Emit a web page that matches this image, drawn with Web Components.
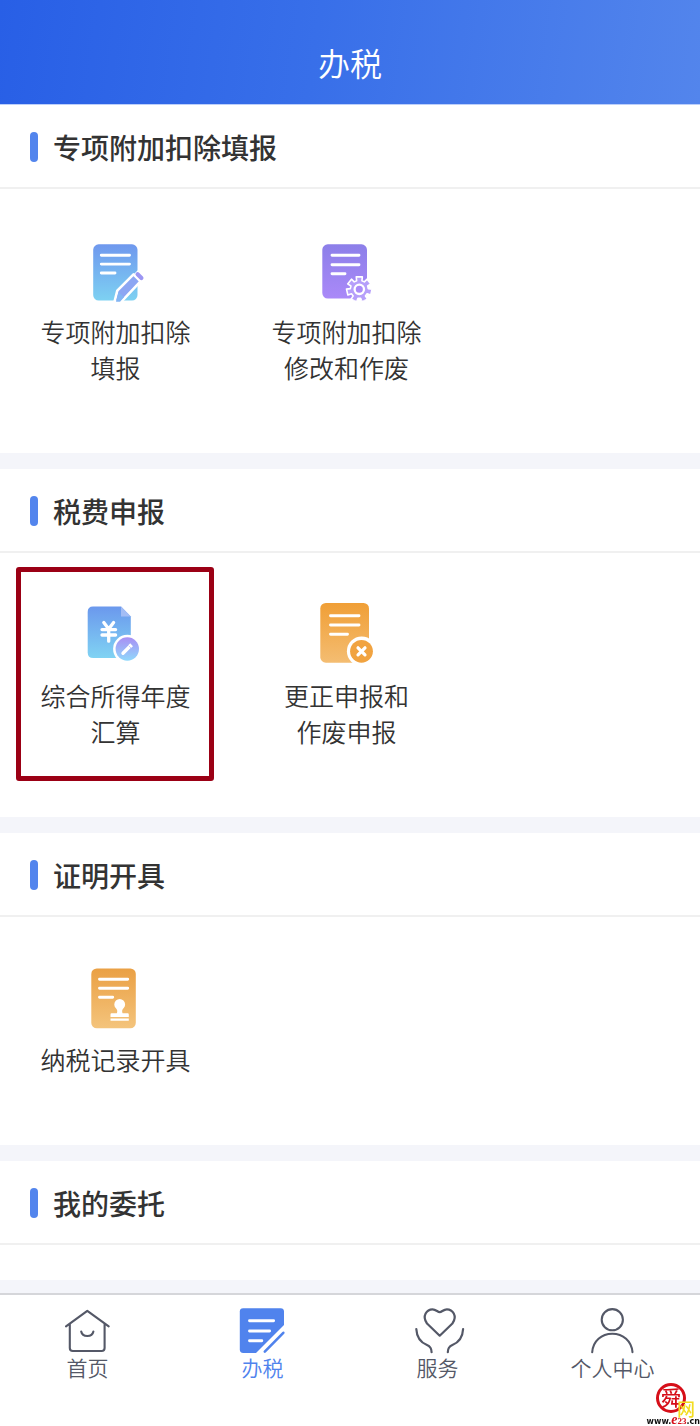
<!DOCTYPE html>
<html lang="zh-CN">
<head>
<meta charset="utf-8">
<meta name="viewport" content="width=device-width, initial-scale=1">
<title>办税</title>
<style>
  body { margin: 0; background: #f4f5fa; font-family: "Noto Sans CJK SC", sans-serif; color: #333; }
</style>
</head>
<body>
<tax-app>
  <app-header slot="header">办税</app-header>
  <menu-section heading="专项附加扣除填报">
    <menu-item icon="fill">专项附加扣除<br>填报</menu-item>
    <menu-item icon="modify">专项附加扣除<br>修改和作废</menu-item>
  </menu-section>
  <menu-section heading="税费申报">
    <menu-item icon="annual" marked>综合所得年度<br>汇算</menu-item>
    <menu-item icon="correct">更正申报和<br>作废申报</menu-item>
  </menu-section>
  <menu-section heading="证明开具">
    <menu-item icon="record">纳税记录开具</menu-item>
  </menu-section>
  <menu-section heading="我的委托"></menu-section>
  <tab-bar slot="footer">
    <tab-item icon="home">首页</tab-item>
    <tab-item icon="tax" active>办税</tab-item>
    <tab-item icon="service">服务</tab-item>
    <tab-item icon="user">个人中心</tab-item>
  </tab-bar>
  <site-mark slot="footer"></site-mark>
</tax-app>

<script>
const define = (name, html, setup, observed = []) => {
  const template = document.createElement('template');
  template.innerHTML = html;
  customElements.define(name, class extends HTMLElement {
    static observedAttributes = observed;
    constructor() {
      super();
      this.attachShadow({ mode: 'open' }).append(template.content.cloneNode(true));
    }
    connectedCallback() { if (setup) setup(this, this.shadowRoot); }
    attributeChangedCallback() { if (setup) setup(this, this.shadowRoot); }
  });
};

const gradient = (from, to) =>
  `<defs><linearGradient id="g" x1="0" y1="0" x2="0" y2="1"><stop stop-color="${from}"/><stop offset="1" stop-color="${to}"/></linearGradient></defs>`;
const lines = d => `<path d="${d}" fill="none" stroke="#fff" stroke-width="2.9" stroke-linecap="round"/>`;

/* A cog outline with seven teeth */
const cog = (cx, cy, outer, inner) => {
  const points = [];
  for (let i = 0; i < 7; i++) {
    const a = i * Math.PI * 2 / 7 - Math.PI / 2;
    for (const [r, o] of [[inner, -.3], [outer, -.24], [outer, .24], [inner, .3]])
      points.push((cx + r * Math.cos(a + o)).toFixed(2) + ',' + (cy + r * Math.sin(a + o)).toFixed(2));
  }
  return points.join(' ');
};

const ICONS = {
  fill: gradient('#6f98ee', '#7dd1f2') +
    `<rect x="10.2" y="5.3" width="44.3" height="56.2" rx="5.5" fill="url(#g)"/>` +
    lines('M18.3 16.3H46.5M18.3 25.1H46.5M18.3 34H32') +
    `<path d="M31.5 62.7L34.3 51.6L50.5 35.4L57.5 42.4L41 59.8L38 62.7Z" fill="#8ca6f3" stroke="#fff" stroke-width="2.6" stroke-linejoin="round"/>
     <path d="M33 62.7L35.6 53L41 58.3L37 62.7Z" fill="#83b5f3"/>
     <path d="M52.6 33.4L58.8 39.6" stroke="#fff" stroke-width="6"/>
     <path d="M54.6 35.2L58.4 39" stroke="#9c96f3" stroke-width="4.2" stroke-linecap="round"/>`,
  modify: gradient('#8c7fe9', '#aa89f8') +
    `<rect x="8.3" y="5.3" width="44.7" height="54.2" rx="5.5" fill="url(#g)"/>` +
    lines('M18 16.3H45M18 25.7H45M18 34.7H31') +
    `<clipPath id="c"><rect width="65" height="61.7"/></clipPath>
     <g clip-path="url(#c)"><polygon points="${cog(45.3, 50.3, 12.8, 9)}" fill="#b69ffa" stroke="#fff" stroke-width="1.6" stroke-linejoin="round"/>
     <circle cx="45.3" cy="50.3" r="4.7" fill="#ab8bf8" stroke="#fff" stroke-width="2.3"/></g>`,
  annual: gradient('#6b98ed', '#80d3f3') +
    `<linearGradient id="b" x1="0" y1="0" x2="0" y2="1"><stop stop-color="#a98ff4"/><stop offset="1" stop-color="#90d8fb"/></linearGradient>
     <path d="M10 3.4H38L47.8 13.5V49.5Q47.8 55 42.3 55H10.2Q4.7 55 4.7 49.5V8.9Q4.7 3.4 10 3.4Z" fill="url(#g)"/>
     <path d="M38 3.4L47.8 13.5H38Z" fill="#a3bdf5"/>
     <path d="M20.8 19.6L25.7 26L30.6 19.6M19 26.6H32.6M19 32H32.6M25.7 26V38.2" fill="none" stroke="#fff" stroke-width="3.3" stroke-linecap="round" stroke-linejoin="round"/>
     <circle cx="44.3" cy="46" r="14.2" fill="#fff"/><circle cx="44.3" cy="46" r="11.7" fill="url(#b)"/>
     <path d="M40 50.2L46 44.3" stroke="#fff" stroke-width="3.4" stroke-linecap="round"/>
     <path d="M46.4 43.9L48.6 41.8" stroke="#fff" stroke-width="4"/><path d="M45.6 42.6L48 45" stroke="#a9aff8" stroke-width=".6"/>`,
  correct: gradient('#f09f36', '#f4bd72') +
    `<rect x="6.3" y="0" width="48.7" height="59.7" rx="5.5" fill="url(#g)"/>` +
    lines('M16.5 12.7H45M16.5 22H45M16.5 31.3H33.5') +
    `<circle cx="47.7" cy="48.3" r="14.8" fill="#fff"/><circle cx="47.5" cy="48.3" r="11.4" fill="#f1a340"/>
     <path d="M44 44.8L51 51.8M51 44.8L44 51.8" stroke="#fff" stroke-width="3.2" stroke-linecap="round"/>`,
  record: gradient('#eaa044', '#f4c47c') +
    `<rect x="8.3" y="1.5" width="44.5" height="59.8" rx="5.5" fill="url(#g)"/>` +
    lines('M16.5 12.3H44.7M16.5 21.3H44.7M16.5 30.3H29.7') +
    `<path d="M33.8 46.3C34.8 43.5 34 42.7 32.7 41A5.4 5.4 0 1 1 40.7 41C39.4 42.7 38.6 43.5 39.6 46.3H44.7Q45.8 46.3 45.8 47.4V50H27.5V47.4Q27.5 46.3 28.6 46.3ZM27.5 51.5H45.8V53.8H27.5Z" fill="#fff"/>`,
  home: `<g fill="none" stroke="currentColor" stroke-width="2.1" stroke-linecap="round" stroke-linejoin="round">
     <path d="M6 20.3L27.3 4.8L48.7 20.3M9.8 18V42Q9.8 45 12.8 45H41.6Q44.6 45 44.6 42V18M21.2 25.5A6.2 5.5 0 0 0 33.4 25.5"/></g>`,
  tax: `<path d="M8.2 2.2H45.6Q49 2.2 49 5.6V19L21 47H8.2Q4.8 47 4.8 43.6V5.6Q4.8 2.2 8.2 2.2Z" fill="currentColor"/>
     <path d="M14.5 14.7H38.6M14.5 25H34.6M14.5 34.7H26.8" stroke="#fff" stroke-width="2.9" stroke-linecap="round"/>
     <path d="M48.3 26.8L29.8 45.6" stroke="currentColor" stroke-width="2.6" stroke-linecap="round"/>`,
  service: `<g fill="none" stroke="currentColor" stroke-width="2.2" stroke-linecap="round" stroke-linejoin="round">
     <path d="M29.7 29.7L17 17.5C11.5 10 17 3.3 22.5 3.3C26 3.3 27.6 6.2 29.7 6.2C31.8 6.2 33.4 3.3 36.9 3.3C42.4 3.3 47.9 10 42.4 17.5Z"/>
     <path d="M6.3 23C6.8 33 11.5 36.8 17 39C20.8 40.6 21.6 42.8 21.6 46.2M53.1 23C52.6 33 47.9 36.8 42.4 39C38.6 40.6 37.8 42.8 37.8 46.2"/></g>`,
  user: `<g fill="none" stroke="currentColor" stroke-width="2.1" stroke-linecap="round">
     <circle cx="27.3" cy="13.7" r="10.6"/><path d="M7.2 46.2C8 35 16.6 27.7 27.3 27.7S46.6 35 47.5 46.2"/></g>`
};

define('line-icon', `
  <style>:host { display: block } svg { display: block; width: 100%; height: 100%; overflow: visible }</style>
  <svg aria-hidden="true"></svg>`,
  (host, root) => {
    const svg = root.querySelector('svg');
    svg.setAttribute('viewBox', host.getAttribute('box') || '0 0 65 64');
    svg.innerHTML = ICONS[host.getAttribute('name')] || '';
  }, ['name', 'box']);

define('tax-app', `
  <style>
    :host { display: block }
    main { display: grid; gap: 16px; padding-bottom: 13px }
  </style>
  <slot name="header"></slot>
  <main><slot></slot></main>
  <slot name="footer"></slot>`);

define('app-header', `
  <style>
    :host { display: block; background: linear-gradient(98deg, #285fe6, #386fe9 45%, #5385ec); border-bottom: 1px solid #bccffa }
    h1 { margin: 0; padding: 38px 0 18px; font-size: 32px; line-height: 48px; font-weight: 350; color: #fff; text-align: center }
  </style>
  <h1><slot></slot></h1>`);

define('menu-section', `
  <style>
    :host { display: block; background: #fff }
    h2 { display: flex; align-items: center; gap: 15px; margin: 0; padding: 21px 30px 19px; border-bottom: 2px solid #f0f0f0;
         font-size: 28px; line-height: 42px; font-weight: 500 }
    h2::before { content: ""; width: 8px; height: 30px; border-radius: 4px; background: #5385ed }
    .items { display: grid; grid-template-columns: repeat(3, 1fr); padding-right: 7px; min-height: 35px }
  </style>
  <section><h2></h2><div class="items"><slot></slot></div></section>`,
  (host, root) => { root.querySelector('h2').textContent = host.getAttribute('heading'); });

define('menu-item', `
  <style>
    :host { display: block; position: relative }
    a { display: flex; flex-direction: column; align-items: center; gap: 10px; padding: 50px 0 68px;
        color: inherit; text-decoration: none; font-size: 25px; line-height: 36px; font-weight: 350; text-align: center }
    line-icon { width: 65px; height: 64px }
    :host([marked])::after { content: ""; position: absolute; inset: 14px 17px 36px 16px;
        border: 5px solid #9b0015; border-radius: 3px; pointer-events: none }
  </style>
  <a href="#"><line-icon box="0 0 65 64"></line-icon><span><slot></slot></span></a>`,
  (host, root) => { root.querySelector('line-icon').setAttribute('name', host.getAttribute('icon')); });

define('tab-bar', `
  <style>
    :host { display: block; background: #fff; border-top: 2px solid #d5d6da }
    nav { display: grid; grid-template-columns: repeat(4, 1fr); padding: 11px 0 46px }
  </style>
  <nav><slot></slot></nav>`);

define('tab-item', `
  <style>
    :host { display: block; color: #545867 }
    :host([active]) { color: #5083ed }
    a { display: flex; flex-direction: column; align-items: center; color: inherit; text-decoration: none;
        font-size: 21px; line-height: 26px; font-weight: 350 }
    line-icon { width: 55px; height: 48px }
  </style>
  <a href="#"><line-icon box="0 0 55 48"></line-icon><span><slot></slot></span></a>`,
  (host, root) => {
    root.querySelector('line-icon').setAttribute('name', host.getAttribute('icon'));
    if (host.hasAttribute('active')) root.querySelector('a').setAttribute('aria-current', 'page');
  });

/* Site stamp that floats over the bottom right corner */
define('site-mark', `
  <style>
    :host { display: block; position: fixed; right: 0; bottom: 0; width: 56px; height: 43px; line-height: 1 }
    .seal { position: absolute; left: 12px; top: 0; width: 24px; height: 24px; border: 3px solid #d60f19; border-radius: 50%;
            display: grid; place-items: center; font-size: 20px; line-height: 20px; font-weight: 500; color: #d60f19 }
    .net { position: absolute; left: 33px; top: 16px; font-size: 18px; font-weight: 500; color: #f3dc20 }
    .url { position: absolute; right: 0; bottom: 0; display: flex; align-items: baseline;
           font: 700 8px/8px "DejaVu Sans", sans-serif; color: #111 }
    i { font: italic 700 14px/8px "Liberation Serif", serif; color: #d60f19 }
    b { font: 700 9px/8px "Liberation Serif", serif; color: #d60f19 }
  </style>
  <span class="seal">舜</span><span class="net">网</span>
  <span class="url">www.<i>e</i><b>23</b>.cn</span>`);
</script>
</body>
</html>
